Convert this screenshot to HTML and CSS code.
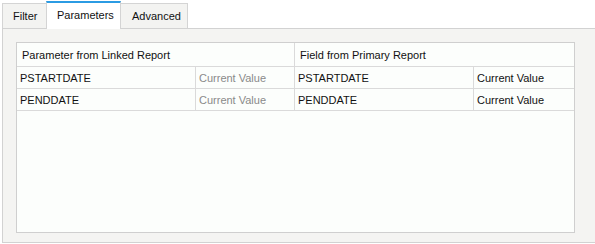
FILE: index.html
```html
<!DOCTYPE html>
<html lang="en">
<head>
    <meta charset="UTF-8" />
    <title>Link Parameters</title>
    <link rel="stylesheet" href="styles.css">
</head>
<body>
    <div class="tabs">
        <div class="tab tab-filter">Filter</div>
        <div class="tab tab-params active">Parameters</div>
        <div class="tab tab-advanced">Advanced</div>
    </div>
    <div class="panel">
        <div class="grid">
            <div class="cell head span2">Parameter from Linked Report</div>
            <div class="cell head span2 last">Field from Primary Report</div>

            <div class="cell">PSTARTDATE</div>
            <div class="cell muted">Current Value</div>
            <div class="cell">PSTARTDATE</div>
            <div class="cell last">Current Value</div>

            <div class="cell">PENDDATE</div>
            <div class="cell muted">Current Value</div>
            <div class="cell">PENDDATE</div>
            <div class="cell last">Current Value</div>
        </div>
    </div>
</body>
</html>
```

FILE: styles.css
```css
body {
    margin: 0;
    background: #fff;
    font-family: "Liberation Sans", Arial, sans-serif;
    font-size: 11px;
    color: #111;
}
.tabs {
    display: flex;
    align-items: flex-end;
    height: 28px;
    padding-left: 2px;
}
.tab {
    box-sizing: border-box;
    height: 25px;
    line-height: 24px;
    padding-left: 10px;
    border: 1px solid #d4d4d4;
    border-bottom: none;
    background: #f3f3f1;
    margin-left: -1px;
}
.tab-filter {
    width: 45px;
    margin-left: 0;
}
.tab-params {
    width: 75px;
}
.tab-advanced {
    width: 68px;
    padding-left: 11px;
}
.tab.active {
    position: relative;
    z-index: 1;
    height: 28px;
    line-height: 25px;
    margin-bottom: -1px;
    background: #fff;
    border-top: 2px solid #2b9be3;
}
.panel {
    margin-left: 2px;
    width: 590px;
    height: 200px;
    border: 1px solid #d2d2d2;
    background: #f4f4f2;
    padding: 13px 0 0 13px;
}
.grid {
    display: grid;
    grid-template-columns: 179px 99px 179px 100px;
    grid-auto-rows: 22px;
    grid-template-rows: 24px;
    width: 557px;
    height: 189px;
    align-content: start;
    border: 1px solid #cfcfcf;
    background: #fcfefc;
}
.cell {
    border-right: 1px solid #dadada;
    border-bottom: 1px solid #dadada;
    padding-left: 3px;
    display: flex;
    align-items: center;
    white-space: nowrap;
}
.cell.last {
    border-right: none;
}
.head {
    padding-left: 5px;
}
.span2 {
    grid-column: span 2;
}
.muted {
    color: #8a8a8a;
}
```
